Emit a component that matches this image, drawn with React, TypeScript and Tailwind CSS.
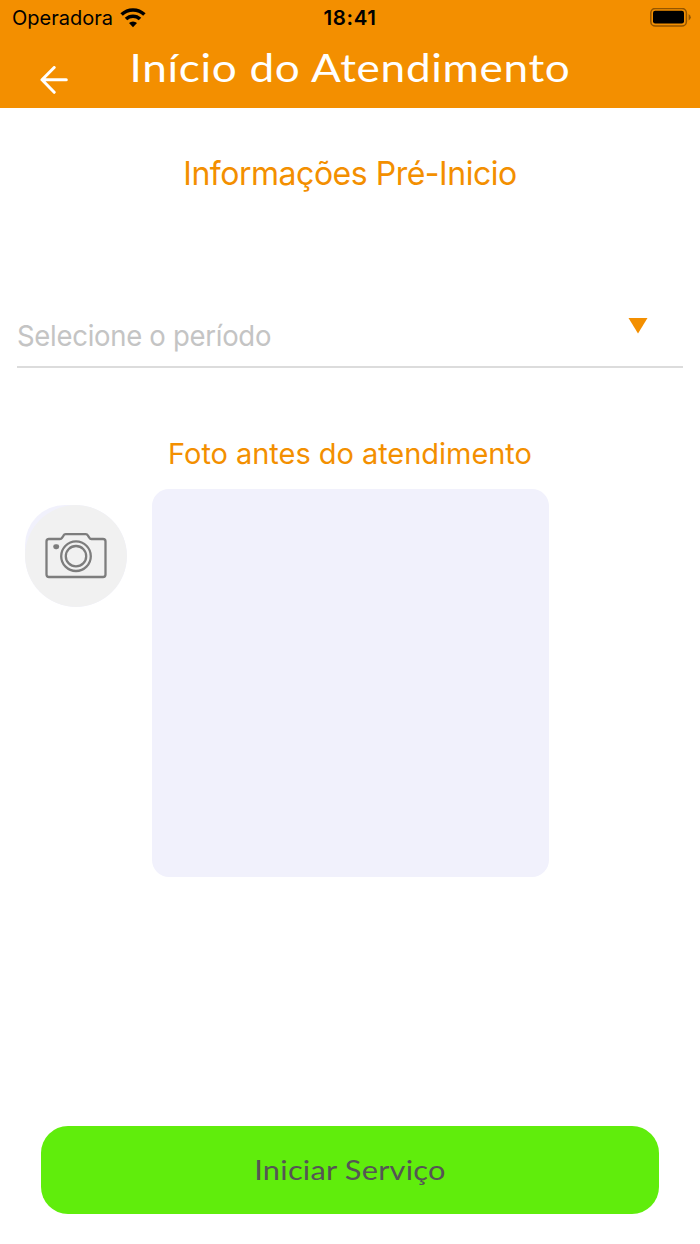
import { useState } from "react";

const WifiIcon = () => (
  <svg width="26" height="20" viewBox="0 0 26 20" fill="none">
    <path d="M1.6 6.6a16.2 16.2 0 0 1 22.8 0" stroke="black" strokeWidth="3.5" />
    <path d="M6 11.1a9.9 9.9 0 0 1 14 0" stroke="black" strokeWidth="3.5" />
    <path d="M13 19.2l-4-4.1a5.7 5.7 0 0 1 8 0z" fill="black" />
  </svg>
);

const BatteryIcon = () => (
  <svg width="42" height="20" viewBox="0 0 42 20" fill="none">
    <rect x="0.8" y="0.4" width="35.6" height="17.6" rx="4.6" stroke="#945600" strokeWidth="1.5" />
    <rect x="3" y="2.8" width="31" height="12.6" rx="2.2" fill="black" />
    <path d="M38.6 6.1q2.2 1.2 2.2 3.2t-2.2 3.2z" fill="#945600" />
  </svg>
);

const BackIcon = () => (
  <svg width="28" height="28" viewBox="0 0 28 28" fill="none">
    <path
      d="M14.2 1.5L2 13.8l12.2 12.5M2 13.8h24.3"
      stroke="white"
      strokeWidth="3"
      strokeLinecap="round"
      strokeLinejoin="round"
    />
  </svg>
);

const CameraIcon = () => (
  <svg width="62" height="46" viewBox="0 0 62 46" fill="none" stroke="#7d7d7d">
    <path
      d="M4 6h10.8q1.5 0 2.2-1.2l1.5-2.2Q19.2 1.2 20.6 1.2h20.2q1.4 0 2 1.2l1.6 2.4Q45 6 46.4 6H58q2.5 0 2.5 2.5v33q0 2.5-2.5 2.5H4q-2.5 0-2.5-2.5v-33Q1.5 6 4 6z"
      strokeWidth="2.3"
    />
    <circle cx="31" cy="23.2" r="14.8" strokeWidth="2.3" />
    <circle cx="31" cy="23.2" r="10.2" strokeWidth="2.3" />
    <rect x="8.2" y="11.2" width="6" height="5" rx="2.4" fill="#7d7d7d" stroke="none" />
  </svg>
);

const App = () => {
  const [period] = useState("");

  return (
    <div className="flex flex-col w-full h-[1244px] bg-white overflow-hidden font-['Inter',sans-serif]">
      <header className="bg-[#f38f00] w-full h-[108px] flex flex-col">
        <div className="grid grid-cols-3 items-center h-9 px-2 text-black">
          <div className="flex items-center pl-1">
            <span className="w-[108px] text-[20px]">Operadora</span>
            <WifiIcon />
          </div>
          <p className="text-center text-[20.5px] font-semibold tracking-[0.6px]">18:41</p>
          <div className="flex justify-end">
            <BatteryIcon />
          </div>
        </div>
        <div className="grid grid-cols-[90px_1fr_90px] h-[72px]">
          <button className="pl-10 pt-[30px] flex items-start" aria-label="Voltar">
            <BackIcon />
          </button>
          <h1 className="flex justify-center h-[62px] items-center text-white text-[38px] tracking-[0.6px] whitespace-nowrap font-['Lato',sans-serif] scale-x-[1.16]">
            Início do Atendimento
          </h1>
        </div>
      </header>

      <main className="flex flex-col flex-1 text-[#f38f00]">
        <h2 className="mt-[41px] h-12 leading-[48px] text-center text-[33px] tracking-[-0.5px] scale-x-[0.97]">
          Informações Pré-Inicio
        </h2>

        <button className="mx-[17px] mt-[103px] h-[68px] border-b-2 border-[#dcdcdc] flex justify-between text-left">
          <span className="mt-4 leading-10 text-[29px] text-[#c4c4c4] tracking-[-0.3px] origin-left scale-x-[0.948]">
            {period || "Selecione o período"}
          </span>
          <svg className="mt-[18px] mr-[35px]" width="20" height="16" viewBox="0 0 20 16">
            <path d="M0.5 0h19L10 15.5z" fill="#f38f00" />
          </svg>
        </button>

        <h3 className="mt-[66px] h-10 leading-10 text-center text-[29px] tracking-[-0.04px]">
          Foto antes do atendimento
        </h3>

        <section className="mt-[15px] flex items-start">
          <button
            className="ml-[25px] mt-4 w-[102px] h-[102px] rounded-[51px] rounded-tl-[40px] bg-[#f1f1fc] overflow-hidden"
            aria-label="Tirar foto"
          >
            <span className="w-full h-full rounded-full bg-[#f1f1f1] flex items-center justify-center">
              <CameraIcon />
            </span>
          </button>
          <div className="ml-[25px] w-[397px] h-[388px] rounded-[17px] bg-[#f1f1fc]" />
        </section>

        <button className="mt-auto mb-[30px] mx-[41px] h-[88px] rounded-[27px] bg-[#60ed0c] text-[#555555] text-[27px] font-['Lato',sans-serif]">
          <span className="inline-block scale-x-[1.14] tracking-[0.2px]">Iniciar Serviço</span>
        </button>
      </main>
    </div>
  );
};

export default App;
